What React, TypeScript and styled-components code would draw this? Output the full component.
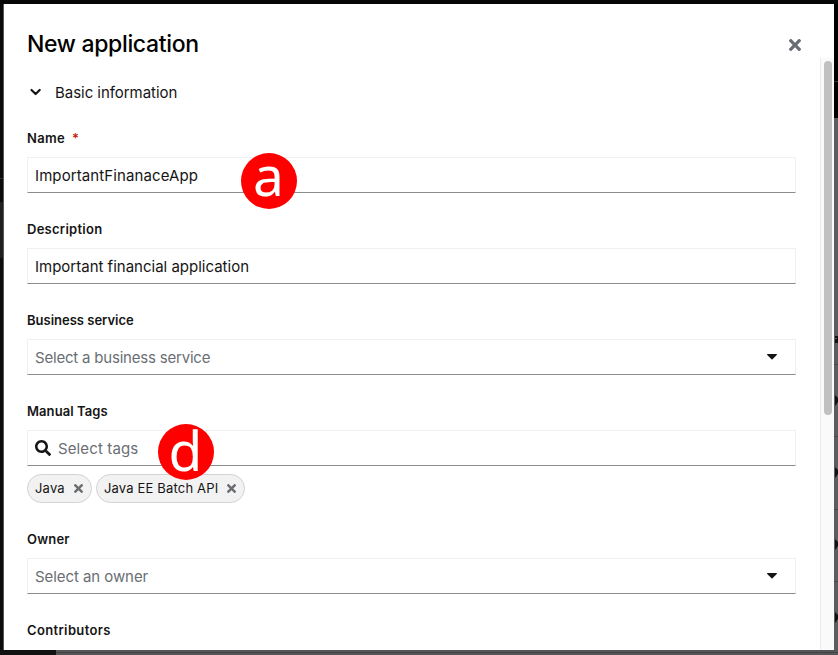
import React from "react";
import styled, { createGlobalStyle } from "styled-components";

const GlobalStyle = createGlobalStyle`
  * { box-sizing: border-box; }
  body { margin: 0; overflow: hidden; background: #080808; }
  button, input { font: inherit; color: inherit; margin: 0; padding: 0; border: 0; background: none; outline: 0; }
`;

const Page = styled.div`
  display: grid;
  grid-template-columns: 4px 830px 4px;
  grid-template-rows: 4px 646px 5px;
  width: 838px;
  height: 655px;
  overflow: hidden;
  background: #080808;
  color: #151515;
  font-family: Inter, "Open Sans", sans-serif;
`;
const TopEdge = styled.div`
  grid-column: 1 / -1;
  background: #070708;
`;
const LeftEdge = styled.div`
  border-right: 1px solid #56565a;
  background: linear-gradient(#0a0a0b 0 174px, #2e2e30 174px 175px, #0a0a0b 175px 198px, #202022 198px 254px, #0c0c0d 254px);
`;
const RightEdge = styled.div`
  background: linear-gradient(#000 0 77px, #333 77px 78px, #000 78px 114px, #5c5c5e 114px 360px, #4b4b4d 360px 361px, #5c5c5e 361px 432px, #4b4b4d 432px 433px, #5c5c5e 433px 505px, #4b4b4d 505px 506px, #5c5c5e 506px 577px, #4b4b4d 577px 578px, #5c5c5e 578px);
  svg { display: block; }
`;
const BottomEdge = styled.div`
  grid-column: 1 / -1;
  background: linear-gradient(90deg, #111 0 56px, transparent 56px), linear-gradient(#555557 0 2px, #434345 2px 3px, #555557 3px);
`;
const Modal = styled.section`
  display: flex;
  flex-direction: column;
  background: #fff;
`;
const Header = styled.header`
  display: flex;
  justify-content: space-between;
  height: 54px;
  padding: 22px 33px 0 23px;
`;
const Title = styled.h1`
  margin: 0;
  font-size: 23px;
  line-height: 36px;
  font-weight: 500;
  letter-spacing: -0.33px;
  color: #000;
  white-space: nowrap;
`;
const CloseButton = styled.button`
  display: flex;
  height: 38px;
  align-items: center;
`;
const Content = styled.div`
  display: flex;
  height: 592px;
  overflow: hidden;
`;
const Form = styled.form`
  flex: 1;
  padding: 21px 24px 0 23px;
`;
const SectionToggle = styled.button`
  display: flex;
  align-items: center;
  gap: 13px;
  height: 26px;
  padding-left: 2px;
  font-size: 15px;
  letter-spacing: -0.04px;
`;
const Field = styled.div<{ $first?: boolean }>`
  display: flex;
  flex-direction: column;
  margin-top: ${(p) => (p.$first ? 22 : 25)}px;
  position: relative;
`;
const Label = styled.label<{ $tracking: number }>`
  height: 22px;
  margin-bottom: 8px;
  font-size: 13px;
  line-height: 22px;
  font-weight: 600;
  letter-spacing: ${(p) => p.$tracking}px;
`;
const Required = styled.span`
  margin-left: 7px;
  color: #c9190b;
`;
const Control = styled.div<{ $tracking: number }>`
  display: flex;
  align-items: center;
  gap: 7px;
  height: 36px;
  padding: 0 18px 0 7px;
  border: 1px solid #f0f0f0;
  border-bottom-color: #8a8d90;
  font-size: 15px;
  letter-spacing: ${(p) => p.$tracking}px;
  input { flex: 1; min-width: 0; height: 33px; letter-spacing: inherit; }
  input::placeholder { color: #6a6e73; opacity: 1; }
`;
const Chips = styled.div`
  display: flex;
  gap: 4px;
  margin-top: 8px;
`;
const Chip = styled.span<{ $tracking: number }>`
  display: flex;
  align-items: center;
  justify-content: space-between;
  gap: 9px;
  height: 29px;
  padding: 0 8px 1px 7px;
  border: 1px solid #d2d2d2;
  border-radius: 15px;
  background: #f2f2f2;
  font-size: 13px;
  letter-spacing: ${(p) => p.$tracking}px;
  white-space: nowrap;
`;
const Marker = styled.span<{ $left: number; $top: number; $lineHeight: number }>`
  position: absolute;
  left: ${(p) => p.$left}px;
  top: ${(p) => p.$top}px;
  width: 56px;
  height: 56px;
  border-radius: 50%;
  background: #f00;
  color: #fff;
  font-family: "Noto Sans", sans-serif;
  font-size: 55px;
  line-height: ${(p) => p.$lineHeight}px;
  text-align: center;
`;
const Track = styled.div`
  width: 14px;
  padding: 3px 2px 0 3px;
  border-left: 1px solid #ebebeb;
  background: #fafafa;
`;
const Thumb = styled.div`
  width: 8px;
  height: 354px;
  border-radius: 4px;
  background: #c1c1c1;
`;

const Cross = ({ size, color = "#6a6e73" }: { size: number; color?: string }) => (
  <svg width={size} height={size} viewBox="0 0 352 352" fill={color}>
    <path d="m243 176 100-100c12-12 12-32 0-44L321 9c-13-12-33-12-45 0L176 109 76 9C64-3 44-3 32 9L9 32C-3 44-3 64 9 76l100 100L9 276c-12 12-12 32 0 45l23 22c12 12 32 12 44 0l100-100 100 100c12 12 32 12 45 0l22-22c12-13 12-33 0-45z" />
  </svg>
);
const Caret = () => (
  <svg width="10" height="6" viewBox="0 0 10 6" fill="#151515">
    <path d="M.7 0h8.6c.6 0 .9.7.5 1.1L5.5 5.3a.7.7 0 0 1-1 0L.2 1.1C-.2.7.1 0 .7 0z" />
  </svg>
);
const Chevron = () => (
  <svg width="13" height="8" viewBox="0 0 13 8" fill="none" stroke="#151515" strokeWidth="2.2" strokeLinecap="round" strokeLinejoin="round">
    <path d="m2.500 2 4.100 4L10.700 2" />
  </svg>
);
const Search = () => (
  <svg width="16" height="16" viewBox="0 0 512 512" fill="#151515">
    <path d="M505 442.7 405.300 343c-4.500-4.500-10.600-7-17-7H372c27.600-35.300 44-79.700 44-128C416 93.100 322.900 0 208 0S0 93.100 0 208s93.100 208 208 208c48.300 0 92.700-16.400 128-44v16.300c0 6.400 2.500 12.500 7 17l99.700 99.700c9.400 9.400 24.600 9.400 33.900 0l28.300-28.300c9.400-9.400 9.400-24.600.1-34zM208 336c-70.700 0-128-57.200-128-128 0-70.700 57.200-128 128-128 70.700 0 128 57.200 128 128 0 70.700-57.200 128-128 128z" />
  </svg>
);

export default function App() {
  return (
    <>
      <GlobalStyle />
      <Page>
        <TopEdge />
        <LeftEdge />
        <Modal>
          <Header>
            <Title>New application</Title>
            <CloseButton aria-label="Close"><Cross size={12} /></CloseButton>
          </Header>
          <Content>
            <Form>
              <SectionToggle type="button"><Chevron />Basic information</SectionToggle>
              <Field $first>
                <Label $tracking={0.3}>Name<Required>*</Required></Label>
                <Control $tracking={0.1}><input defaultValue="ImportantFinanaceApp" /></Control>
                <Marker $left={213.500} $top={25.500} $lineHeight={43}>a</Marker>
              </Field>
              <Field>
                <Label $tracking={0.27}>Description</Label>
                <Control $tracking={0}><input defaultValue="Important financial application" /></Control>
              </Field>
              <Field>
                <Label $tracking={0}>Business service</Label>
                <Control $tracking={-0.2}><input placeholder="Select a business service" /><Caret /></Control>
              </Field>
              <Field>
                <Label $tracking={0.08}>Manual Tags</Label>
                <Control $tracking={0.12}><Search /><input placeholder="Select tags" /></Control>
                <Chips>
                  <Chip $tracking={0.2}>Java<Cross size={9} /></Chip>
                  <Chip $tracking={0.18}>Java EE Batch API<Cross size={9} /></Chip>
                </Chips>
                <Marker $left={130.500} $top={23.500} $lineHeight={51}>d</Marker>
              </Field>
              <Field>
                <Label $tracking={0.2}>Owner</Label>
                <Control $tracking={-0.07}><input placeholder="Select an owner" /><Caret /></Control>
              </Field>
              <Field>
                <Label $tracking={0.36}>Contributors</Label>
              </Field>
            </Form>
            <Track><Thumb /></Track>
          </Content>
        </Modal>
        <RightEdge>
          <svg width="4" height="646" viewBox="0 0 4 646" fill="#111">
            <path d="M1 391l3 3v4l-3 4zM1 463l3 3v4l-3 4zM1 535l3 3v4l-3 4zM1 608l3 3v4l-3 4z" />
            <path d="M1 332h3v7H1v-4h2v-1H1z" />
          </svg>
        </RightEdge>
        <BottomEdge />
      </Page>
    </>
  );
}
